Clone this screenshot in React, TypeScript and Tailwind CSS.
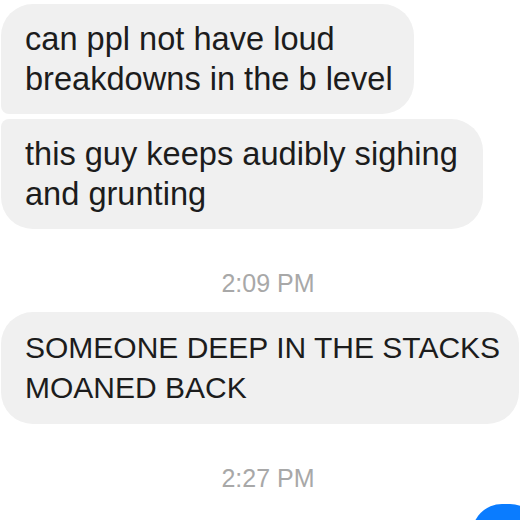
const font = { fontFamily: '"Liberation Sans", Arial, sans-serif' };

function Stamp({ time }: { time: string }) {
    return (
        <div className="mt-[42px] pl-[16px] text-center text-[25px] leading-[25px] text-[#a8a8a8]">
            {time}
        </div>
    );
}

export default function App() {
    return (
        <div className="h-[520px] w-[520px] overflow-hidden bg-white" style={font}>
            <div className="flex flex-col pt-[4px]">
                <div className="flex flex-col gap-[5px]">
                    <div className="ml-[1px] w-[413px] rounded-[32px] rounded-bl-[8px] bg-[#f0f0f0] py-[15px] pl-[24px] pr-[16px] text-[32.6px] leading-[40px] text-[#1c1c1c]">
                        can ppl not have loud breakdowns in the b level
                    </div>
                    <div className="ml-[1px] w-[482px] rounded-[32px] rounded-tl-[8px] bg-[#f0f0f0] py-[15px] pl-[24px] pr-[16px] text-[32.6px] leading-[40px] text-[#1c1c1c]">
                        this guy keeps audibly sighing and grunting
                    </div>
                </div>

                <Stamp time="2:09 PM" />

                <div className="ml-[1px] mt-[16px] w-[518px] rounded-[32px] bg-[#f0f0f0] pb-[16px] pl-[24px] pr-[10px] pt-[16px] text-[30px] leading-[40px] text-[#1c1c1c]">
                    SOMEONE DEEP IN THE STACKS MOANED BACK
                </div>

                <Stamp time="2:27 PM" />

                <div className="ml-auto mr-[-20px] mt-[13px] h-[60px] w-[68px] rounded-[30px] bg-[#0a7cff]" />
            </div>
        </div>
    );
}
